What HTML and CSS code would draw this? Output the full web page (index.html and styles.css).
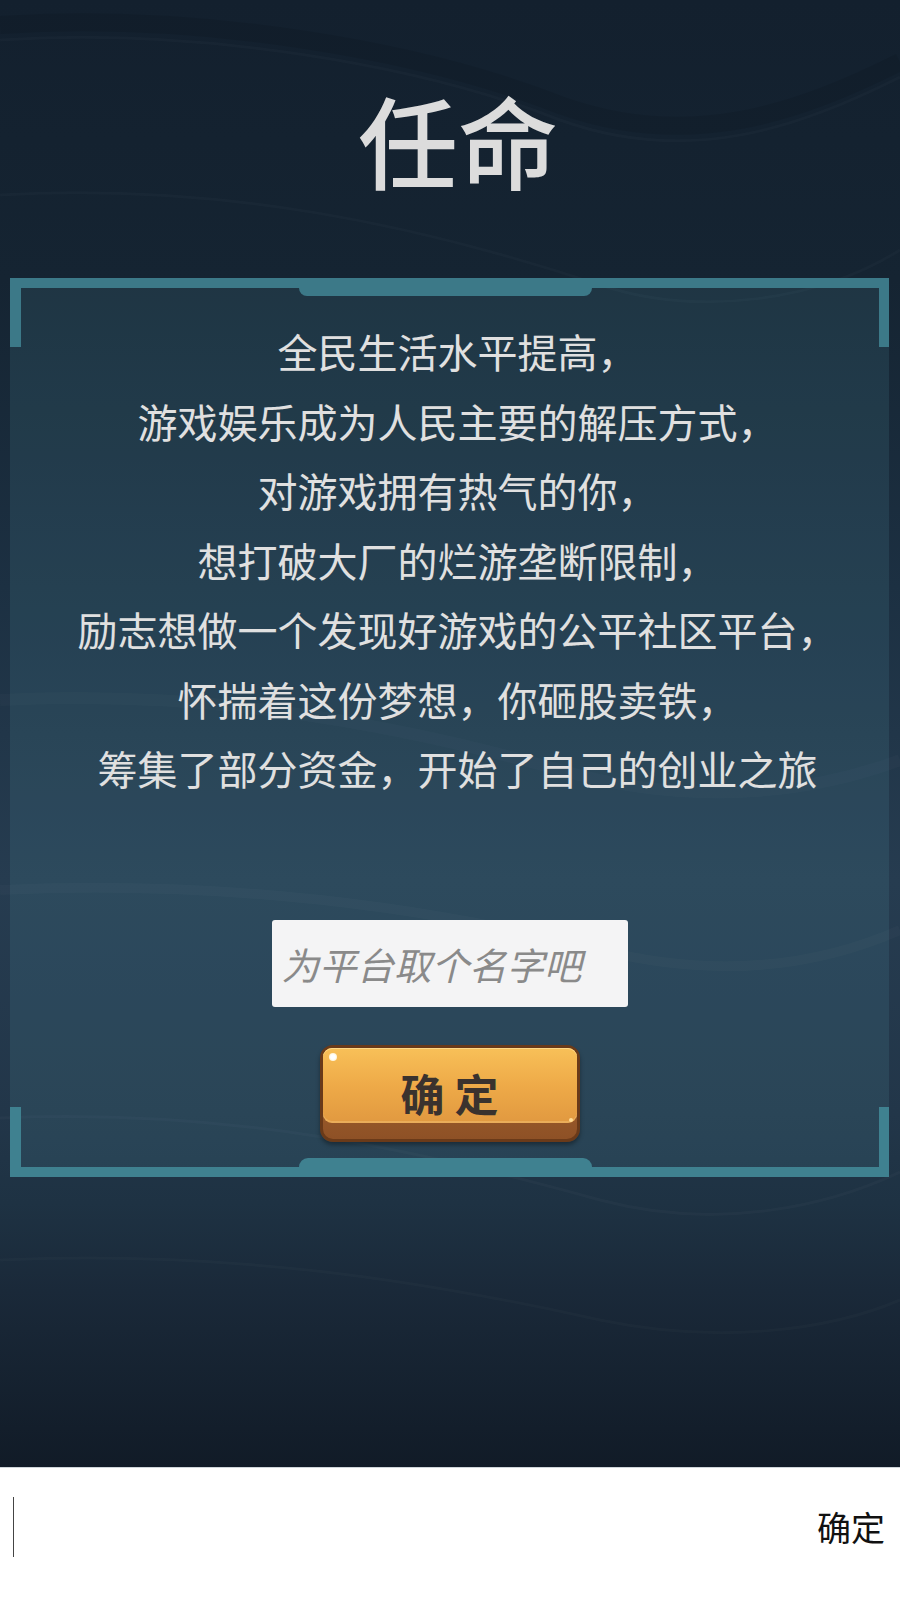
FILE: index.html
```html
<!DOCTYPE html>
<html lang="zh-CN">
<head>
    <meta charset="utf-8">
    <title>任命</title>
    <link rel="stylesheet" href="styles.css">
</head>
<body>
  <div class="screen">
    <h1 class="title">任命</h1>

    <section class="panel">
      <div class="story">
        <p>全民生活水平提高，</p>
        <p>游戏娱乐成为人民主要的解压方式，</p>
        <p>对游戏拥有热气的你，</p>
        <p>想打破大厂的烂游垄断限制，</p>
        <p>励志想做一个发现好游戏的公平社区平台，</p>
        <p>怀揣着这份梦想，你砸股卖铁，</p>
        <p>筹集了部分资金，开始了自己的创业之旅</p>
      </div>

      <input class="name-input" type="text" placeholder="为平台取个名字吧">

      <button class="confirm-btn"><span class="btn-face">确 定</span></button>
    </section>
  </div>

  <!-- keyboard input bar -->
  <div class="ime-bar">
    <span class="caret"></span>
    <span class="ime-ok">确定</span>
  </div>
</body>
</html>
```

FILE: styles.css
```css
body {
    margin: 0;
    font-family: "Noto Sans CJK SC", "Noto Sans", sans-serif;
}

.screen {
    height: 1467px;
    display: flex;
    flex-direction: column;
    align-items: center;
    background-image:
        url("data:image/svg+xml;utf8,<svg xmlns='http://www.w3.org/2000/svg' width='900' height='1467' viewBox='0 0 900 1467' fill='none'><path d='M0 25 C200 12 420 50 560 105 C690 152 800 112 900 62' stroke='black' stroke-opacity='0.08' stroke-width='18'/><path d='M0 40 C200 27 420 65 560 120 C690 167 800 127 900 77' stroke='white' stroke-opacity='0.02' stroke-width='3'/><path d='M0 195 C220 182 420 225 600 285 C700 318 820 300 900 250' stroke='white' stroke-opacity='0.02' stroke-width='3'/><path d='M0 700 C200 690 380 720 560 770 C700 810 820 790 900 760' stroke='white' stroke-opacity='0.02' stroke-width='12'/><path d='M0 890 C220 880 420 905 600 950 C720 980 820 965 900 930' stroke='white' stroke-opacity='0.02' stroke-width='10'/><path d='M0 1118 C230 1108 420 1150 600 1200 C720 1232 830 1205 900 1172' stroke='white' stroke-opacity='0.025' stroke-width='3'/><path d='M0 1260 C230 1250 420 1280 600 1320 C720 1345 830 1330 900 1300' stroke='white' stroke-opacity='0.02' stroke-width='3'/></svg>"),
        linear-gradient(180deg, #13202e 0%, #152432 19%, #1c3042 40%, #263c50 60%, #223649 76%, #1e3243 82%, #1a2939 88%, #111b27 100%);
    background-repeat: no-repeat;
}

.title {
    margin: 0;
    height: 278px;
    padding-left: 16px;
    box-sizing: border-box;
    display: flex;
    align-items: center;
    justify-content: center;
    font-size: 100px;
    font-weight: 500;
    line-height: 1;
    color: #dcdcdc;
}

/* framed box: full top/bottom rails, short bars at each corner */
.panel {
    position: relative;
    align-self: flex-start;
    margin-left: 10px;
    width: 879px;
    box-sizing: border-box;
    border-top: 10px solid #3c7988;
    border-bottom: 10px solid #3f8190;
    padding: 29px 0 25px;
    display: flex;
    flex-direction: column;
    align-items: center;
    background:
        linear-gradient(#3c7988, #3c7988) left top / 11px 59px no-repeat,
        linear-gradient(#3c7988, #3c7988) right top / 10px 59px no-repeat,
        linear-gradient(#3f8190, #3f8190) left bottom / 11px 60px no-repeat,
        linear-gradient(#3f8190, #3f8190) right bottom / 10px 60px no-repeat,
        rgba(90, 160, 175, 0.14);
}

.panel::before,
.panel::after {
    content: "";
    position: absolute;
    left: 289px;
    width: 293px;
}

.panel::before {
    top: 0;
    height: 8px;
    background: #3c7988;
    border-radius: 0 0 10px 10px;
}

.panel::after {
    bottom: 0;
    height: 9px;
    background: #3f8190;
    border-radius: 10px 10px 0 0;
}

.story {
    padding-left: 16px;
}

.story p {
    margin: 0;
    font-size: 40px;
    line-height: 69.5px;
    color: #e0e0e0;
    text-align: center;
    white-space: nowrap;
}

.name-input {
    margin-top: 116.5px;
    width: 356px;
    height: 87px;
    box-sizing: border-box;
    padding: 0 10px;
    border: none;
    border-radius: 3px;
    outline: none;
    background: #f4f4f5;
    font-family: "Noto Sans CJK SC", "Noto Sans", sans-serif;
    font-size: 37.5px;
    font-style: italic;
    color: #333;
}

.name-input::placeholder {
    color: #8a8a8a;
}

.confirm-btn {
    position: relative;
    margin-top: 38px;
    width: 260px;
    height: 97px;
    box-sizing: border-box;
    padding: 0 0 16px;
    border: 3px solid #6a3a19;
    border-radius: 13px;
    background: linear-gradient(180deg, #ab6a31, #8e5126);
    box-shadow: 0 3px 4px rgba(0, 0, 0, 0.35);
    cursor: pointer;
}

.btn-face {
    display: flex;
    align-items: center;
    justify-content: center;
    height: 100%;
    box-sizing: border-box;
    padding-top: 15px;
    border-radius: 9px;
    background: linear-gradient(180deg, #f8c058 0%, #eeaa48 50%, #e19940 100%);
    box-shadow: inset 0 1px 0 #ffd987, inset 0 -2px 0 rgba(255, 220, 150, 0.3);
    font-family: "Noto Sans CJK SC", "Noto Sans", sans-serif;
    font-size: 44px;
    font-weight: 700;
    color: #3a322e;
}

/* little shine spots on the button face */
.confirm-btn::before {
    content: "";
    position: absolute;
    top: 5px;
    left: 6px;
    width: 8px;
    height: 8px;
    border-radius: 50%;
    background: radial-gradient(circle, #fff 40%, #ffe6a8 100%);
}

.confirm-btn::after {
    content: "";
    position: absolute;
    bottom: 17px;
    right: 4px;
    width: 4px;
    height: 4px;
    border-radius: 50%;
    background: #ffdc96;
}

.ime-bar {
    height: 133px;
    box-sizing: border-box;
    border-top: 1px solid #cfd5da;
    padding: 29px 15px 0 13px;
    display: flex;
    justify-content: space-between;
    align-items: flex-start;
    background: #fff;
}

.caret {
    width: 1px;
    height: 60px;
    background: #444;
}

.ime-ok {
    font-size: 34px;
    line-height: 60px;
    color: #111;
}
```
